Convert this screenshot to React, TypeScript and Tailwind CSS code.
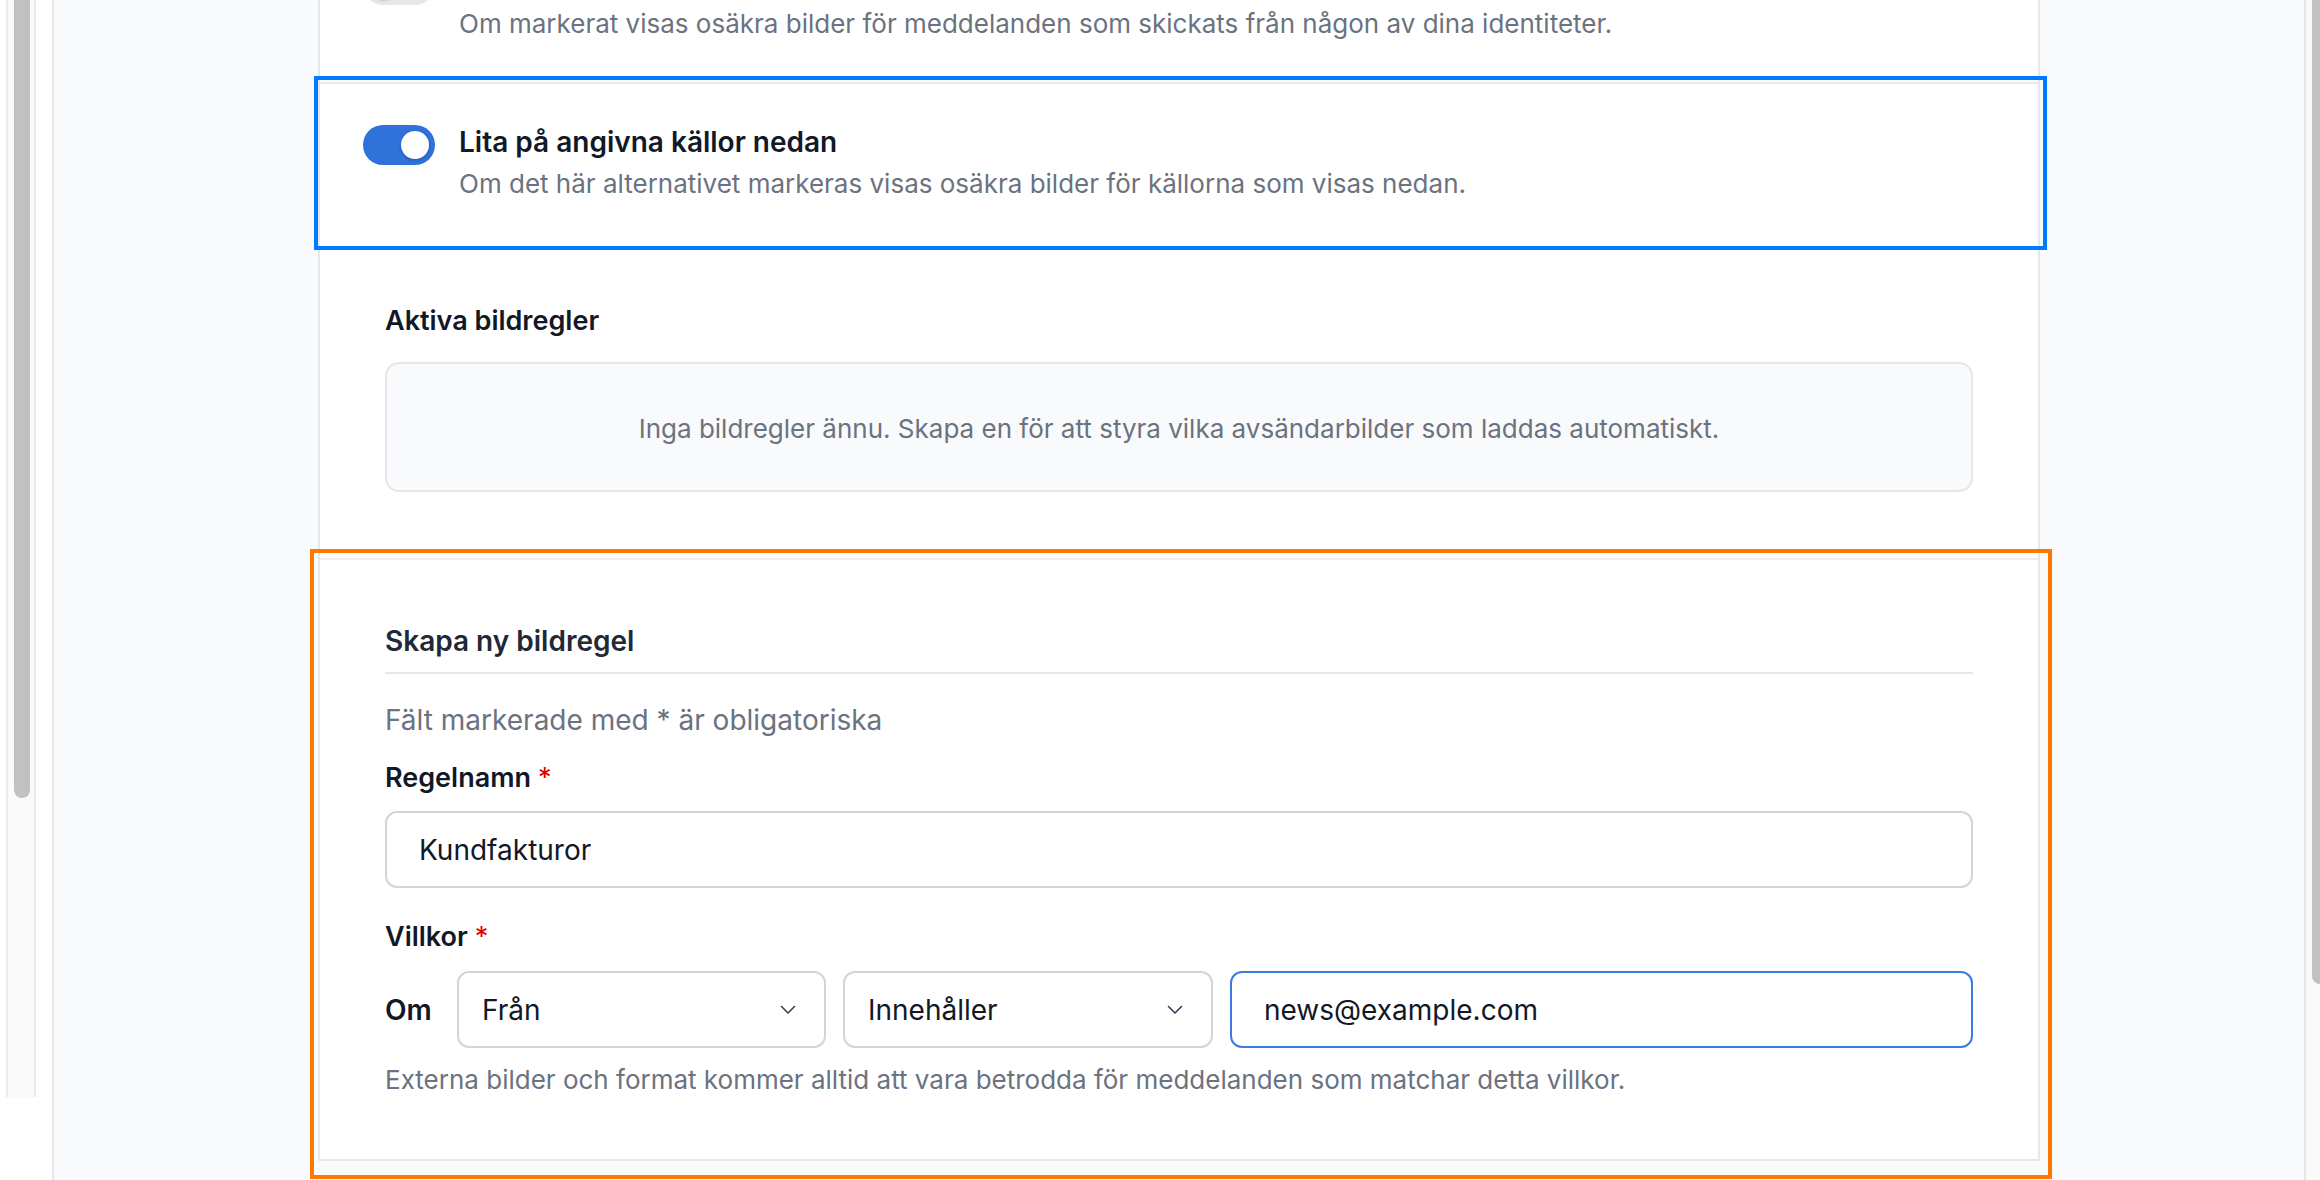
import React from "react";

function Toggle({ on, offset }: { on: boolean; offset: string }) {
  return (
    <div
      className={
        on
          ? `${offset} flex h-[40px] w-[72px] shrink-0 items-center justify-end rounded-full bg-[#2f72d9] px-[6px]`
          : `${offset} flex h-[40px] w-[72px] shrink-0 items-center justify-start rounded-full bg-[#e5e7eb] px-[6px]`
      }
    >
      <div className="h-[28px] w-[28px] rounded-full bg-white shadow-[0_1px_3px_rgba(0,0,0,0.25)]" />
    </div>
  );
}

function ToggleRow({
  on,
  title,
  text,
  first = false,
}: {
  on: boolean;
  title: string;
  text: string;
  first?: boolean;
}) {
  return (
    <div className="flex gap-[24px] border-t-2 border-[#e8eaed] px-[43px] pt-[38px] pb-[40px]">
      <Toggle on={on} offset={first ? "mt-[5px]" : "mt-[3px]"} />
      <div className={first ? "flex flex-col gap-[6px]" : "flex flex-col gap-[4px]"}>
        <div className="text-[28px] leading-[40px] font-semibold text-[#111827]">{title}</div>
        <div className="text-[26px] leading-[36px] text-[#6b7280]">{text}</div>
      </div>
    </div>
  );
}

function Chevron() {
  return (
    <svg width="16" height="10" viewBox="0 0 16 10" fill="none">
      <polyline points="1.5,1.5 8,8 14.5,1.5" stroke="#374151" strokeWidth="1.6" strokeLinecap="round" strokeLinejoin="round" />
    </svg>
  );
}

function SelectBox({ value, width }: { value: string; width: string }) {
  return (
    <div className={`flex h-[77px] ${width} shrink-0 items-center justify-between rounded-[12px] border-2 border-[#d1d5db] bg-white pl-[23px] pr-[28px]`}>
      <span className="text-[28px] leading-[40px] text-[#111827]">{value}</span>
      <Chevron />
    </div>
  );
}

function Required() {
  return <span className="ml-[7px] font-normal text-[#e00000]">*</span>;
}

export default function App() {
  return (
    <div className="flex h-[1180px] w-[2320px] overflow-hidden bg-white font-['Inter',sans-serif]">
      {/* sidebar scrollbar */}
      <div className="flex w-[52px] shrink-0 items-start bg-white pl-[6px]">
        <div className="flex h-[1097px] w-[30px] border-x-2 border-[#ebebeb] bg-[#fafafa] pl-[6px]">
          <div className="h-[798px] w-[16px] rounded-b-full bg-[#c1c1c1]" />
        </div>
      </div>

      {/* settings area */}
      <div className="min-w-0 flex-1 border-l-2 border-[#e5e7eb] bg-[#f9fafb] pl-[264px]">
        <div className="-mt-[80px] w-[1722px] border-x-2 border-b-2 border-[#e5e7eb] bg-white">
          <ToggleRow
            first
            on={false}
            title="Lita på mina identiteter"
            text="Om markerat visas osäkra bilder för meddelanden som skickats från någon av dina identiteter."
          />
          <div className="relative">
            <ToggleRow
              on={true}
              title="Lita på angivna källor nedan"
              text="Om det här alternativet markeras visas osäkra bilder för källorna som visas nedan."
            />
            <div className="pointer-events-none absolute -top-[6px] -bottom-[8px] -left-[6px] -right-[9px] border-[4px] border-[#007aff]" />
          </div>

          {/* active rules */}
          <div className="px-[65px] pt-[59px] pb-[66px]">
            <div className="text-[27px] leading-[40px] font-semibold text-[#111827]">Aktiva bildregler</div>
            <div className="mt-[21px] flex h-[130px] items-center justify-center rounded-[14px] border-2 border-[#e5e7eb] bg-[#f9fafb] pt-[3px]">
              <span className="text-[26px] leading-[36px] text-[#6b7280]">
                Inga bildregler ännu. Skapa en för att styra vilka avsändarbilder som laddas automatiskt.
              </span>
            </div>
          </div>

          {/* new rule form */}
          <div className="relative border-t-2 border-[#eceef1] px-[65px] pt-[61px] pb-[61px]">
            <div className="border-b-2 border-[#e5e7eb] pb-[11px] text-[28px] leading-[40px] font-semibold text-[#1f2937]">
              Skapa ny bildregel
            </div>
            <div className="mt-[26px] text-[28px] leading-[40px] text-[#6b7280]">Fält markerade med * är obligatoriska</div>
            <div className="mt-[18px] text-[27px] leading-[40px] font-semibold text-[#111827]">
              Regelnamn
              <Required />
            </div>
            <div className="mt-[13px] flex h-[77px] items-center rounded-[12px] border-2 border-[#d1d5db] bg-white px-[32px]">
              <span className="text-[28px] leading-[40px] text-[#111827]">Kundfakturor</span>
            </div>
            <div className="mt-[29px] text-[27px] leading-[40px] font-semibold text-[#111827]">
              Villkor
              <Required />
            </div>
            <div className="mt-[14px] flex items-center gap-[17px]">
              <span className="w-[55px] shrink-0 text-[28px] leading-[40px] font-semibold text-[#111827]">Om</span>
              <SelectBox value="Från" width="w-[369px]" />
              <SelectBox value="Innehåller" width="w-[370px]" />
              <div className="flex h-[77px] min-w-0 flex-1 items-center rounded-[12px] border-2 border-[#3b7ddd] bg-white px-[32px]">
                <span className="text-[28px] leading-[40px] text-[#111827]">news@example.com</span>
              </div>
            </div>
            <div className="mt-[14px] text-[26px] leading-[36px] text-[#6b7280]">
              Externa bilder och format kommer alltid att vara betrodda för meddelanden som matchar detta villkor.
            </div>
            <div className="pointer-events-none absolute -top-[11px] -bottom-[20px] -left-[10px] -right-[14px] border-[4px] border-[#ff7700]" />
          </div>
        </div>
      </div>

      {/* page scrollbar */}
      <div className="flex w-[16px] shrink-0 border-l-2 border-[#e6e6e6] bg-[#fafafa] pl-[6px]">
        <div className="h-[984px] w-full rounded-bl-[8px] bg-[#c1c1c1]" />
      </div>
    </div>
  );
}
